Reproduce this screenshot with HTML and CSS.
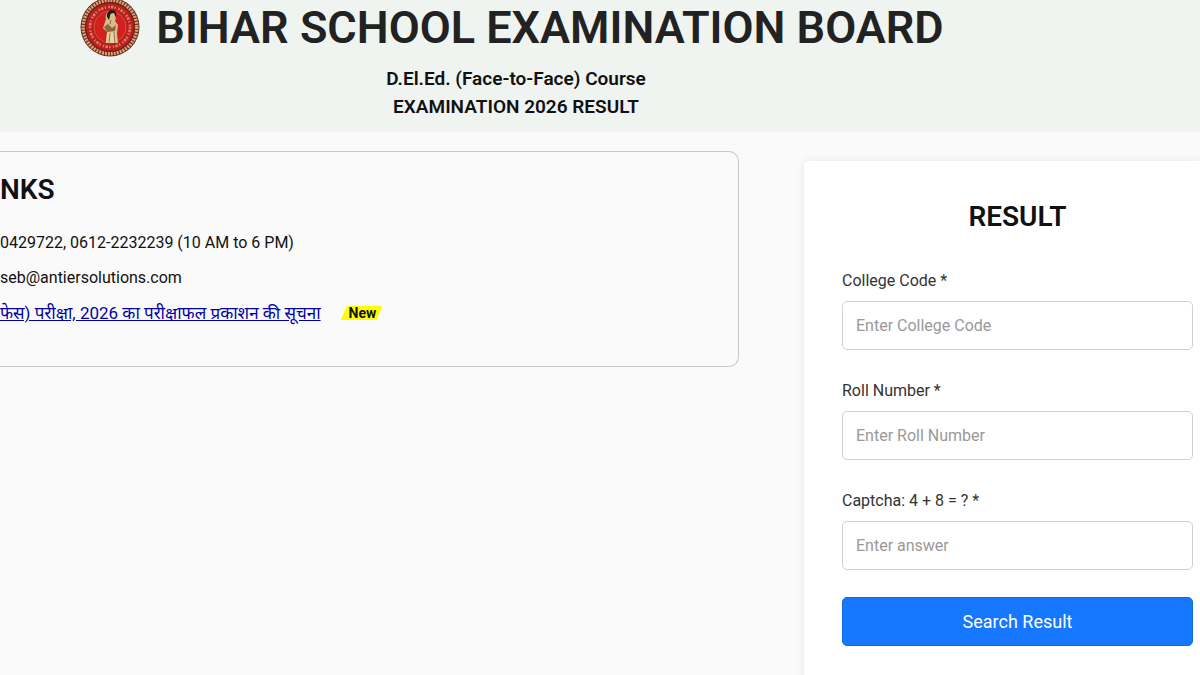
FILE: index.html
```html
<!DOCTYPE html>
<html lang="en">
<head>
  <meta charset="UTF-8">
  <meta name="viewport" content="width=device-width, initial-scale=1.0">
  <title>Bihar School Examination Board</title>
  <link rel="stylesheet" href="styles.css">
</head>
<body>
  <!-- Header -->
  <header class="header">
    <div class="header-inner">
      <div class="brand">
        <svg class="logo" viewBox="0 3 60 57" role="img" aria-label="Board seal">
          <circle cx="30" cy="30" r="29.5" fill="#6e2a20"/>
          <circle cx="30" cy="30" r="26.8" fill="none" stroke="#d9a878" stroke-width="3.4" stroke-dasharray="1.9 1.1"/>
          <circle cx="30" cy="30" r="24.3" fill="#bb1f1c" stroke="#6d201a" stroke-width="1"/>
          <circle cx="30" cy="30" r="20" fill="none" stroke="#dd7d68" stroke-width="2.6" stroke-dasharray="1.6 1.1 2.6 1.3 1.2 2.4"/>
          <circle cx="30" cy="30" r="16" fill="#d1201d" stroke="#dd6f5a" stroke-width="0.6"/>
          <path d="M26 22c-1-5 1-8 5-8s6 3 5 7l-1 3 3 4-1 8 1 10H26l1-11-4-4z" fill="#d8bd8b"/>
          <path d="M27 20c-1-4 2-7 5-7 4 0 5 4 4 8l-2-5c-3 0-4 1-4 3l-1 4z" fill="#2a1712"/>
          <path d="M24 30l4-3 4 4 4-3-1 6-8 1z" fill="#8c6543"/>
          <path d="M27 36l8-1 2 11H26z" fill="#e6d3a4"/>
          <path d="M30 36l-1 10M34 35l1 11M31 23l-1 4" fill="none" stroke="#805534" stroke-width="0.8"/>
        </svg>
        <h1>BIHAR SCHOOL EXAMINATION BOARD</h1>
      </div>
      <p class="course">D.El.Ed. (Face-to-Face) Course<br>EXAMINATION 2026 RESULT</p>
    </div>
  </header>

  <main class="content">
    <!-- Links -->
    <section class="links-box">
      <h2>NKS</h2>
      <p>0429722, 0612-2232239 (10 AM to 6 PM)</p>
      <p>seb@antiersolutions.com</p>
      <p class="notice">
        <a href="#" lang="hi">फेस) परीक्षा, 2026 का परीक्षाफल प्रकाशन की सूचना</a>
        <span class="new-badge">New</span>
      </p>
    </section>

    <!-- Result form -->
    <form class="result-card">
      <h2>RESULT</h2>
      <div class="field">
        <label for="collegeCode">College Code *</label>
        <input type="text" id="collegeCode" placeholder="Enter College Code">
      </div>
      <div class="field">
        <label for="rollNumber">Roll Number *</label>
        <input type="text" id="rollNumber" placeholder="Enter Roll Number">
      </div>
      <div class="field">
        <label for="captcha">Captcha: 4 + 8 = ? *</label>
        <input type="text" id="captcha" placeholder="Enter answer">
      </div>
      <button type="button" class="search-button">Search Result</button>
    </form>
  </main>
</body>
</html>
```
FILE: styles.css
```css
* {
  box-sizing: border-box;
}

body {
  margin: 0;
  font-family: Roboto, "Noto Sans", sans-serif;
  font-size: 16px;
  line-height: 28px;
  color: #111;
  background-color: #fafafa;
  overflow: hidden;
}

h1,
h2,
p {
  margin: 0;
}

.header {
  background-color: #eff4f1;
  padding-bottom: 11px;
}

.header-inner {
  width: 86%;
  text-align: center;
}

.brand {
  display: flex;
  justify-content: center;
  align-items: flex-start;
  gap: 16px;
  padding-right: 8px;
}

.logo {
  width: 60px;
  height: 57px;
}

h1 {
  font-size: 45px;
  line-height: 56px;
  font-weight: 600;
  color: #222;
  white-space: nowrap;
}

.course {
  margin-top: 8px;
  font-size: 19px;
  font-weight: 600;
}

.content {
  display: grid;
  grid-template-columns: 739fr 396fr;
  align-items: start;
  gap: 65px;
  padding-top: 19px;
}

h2 {
  font-size: 28px;
  line-height: 36px;
  font-weight: 600;
}

.links-box {
  padding: 20px 0 39px;
  border: 1px solid #c8c8c8;
  border-left: none;
  border-radius: 0 10px 10px 0;
}

.links-box h2 {
  margin-bottom: 21px;
}

.links-box p {
  margin-top: 7px;
}

.notice {
  display: flex;
  align-items: center;
  gap: 20px;
  font-size: 17px;
}

.notice a {
  color: #00a;
}

.new-badge {
  padding: 0 6px 0 8px;
  font-size: 14px;
  line-height: 14px;
  font-weight: 700;
  background-color: #ff0;
  clip-path: polygon(15% 0, 100% 0, 87% 100%, 0 100%);
}

.result-card {
  margin-top: 10px;
  padding: 38px 7px 40px 38px;
  background-color: #fff;
  border-radius: 5px 0 0 5px;
  box-shadow: 0 0 8px rgba(0, 0, 0, 0.08);
}

.result-card h2 {
  margin-bottom: 32px;
  text-align: center;
}

.field {
  margin-bottom: 27px;
}

.field label {
  display: block;
  margin-bottom: 6px;
  color: #333;
}

.field input {
  display: block;
  width: 100%;
  height: 49px;
  padding: 0 13px;
  font: inherit;
  color: #333;
  background-color: #fff;
  border: 1px solid #d0d0d0;
  border-radius: 5px;
}

.field input::placeholder {
  color: #999;
}

.search-button {
  display: block;
  width: 100%;
  height: 49px;
  font-family: inherit;
  font-size: 18px;
  color: #fff;
  background-color: #1677ff;
  border: 1px solid #1268df;
  border-radius: 5px;
  cursor: pointer;
}
```
